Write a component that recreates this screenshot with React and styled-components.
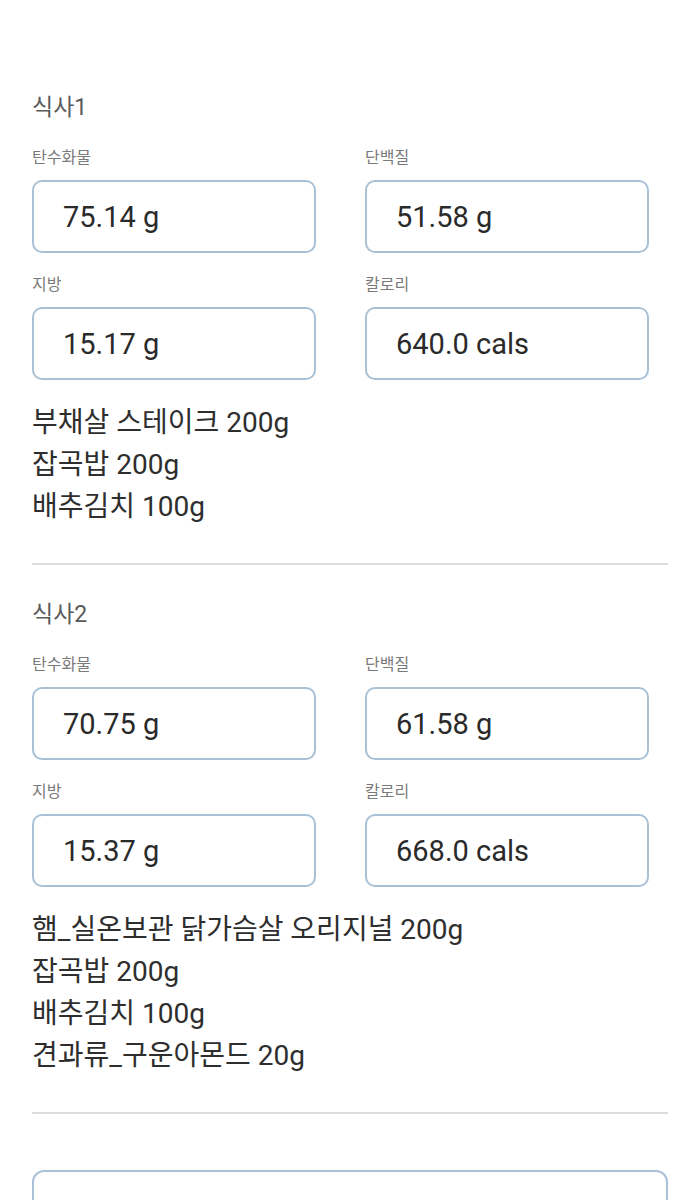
import React from 'react';
import styled, { createGlobalStyle } from 'styled-components';

const GlobalStyle = createGlobalStyle`
  html, body {
    margin: 0;
    padding: 0;
    background: #fff;
  }
  body {
    font-family: Roboto, "Noto Sans CJK KR", sans-serif;
  }
`;

const Page = styled.div`
  width: 700px;
  height: 1200px;
  overflow: hidden;
  box-sizing: border-box;
  padding: 94px 32px 0 32px;
  background: #fff;
`;

const Meal = styled.section`
  display: flex;
  flex-direction: column;
`;

const MealTitle = styled.h2`
  margin: 0;
  font-size: 23px;
  line-height: 28px;
  font-weight: 400;
  color: #5a5a5a;
`;

const NutrientGrid = styled.div`
  display: grid;
  grid-template-columns: 284px 284px;
  column-gap: 49px;
  row-gap: 22px;
  margin-top: 26px;
`;

const Field = styled.div`
  display: flex;
  flex-direction: column;
  gap: 12px;
`;

const FieldLabel = styled.label`
  font-size: 16px;
  line-height: 20px;
  color: #7a7a7a;
`;

const ValueBox = styled.div`
  box-sizing: border-box;
  height: 73px;
  border: 2px solid #a9c1d6;
  border-radius: 10px;
  display: flex;
  align-items: center;
  padding-left: 29px;
  font-size: 29px;
  color: #2a2a2a;
`;

const FoodList = styled.ul`
  list-style: none;
  margin: 22px 0 0 0;
  padding: 0;
`;

const FoodItem = styled.li`
  font-size: 28px;
  line-height: 42px;
  color: #2e2e2e;
`;

const Divider = styled.hr`
  border: none;
  height: 2px;
  background: #dcdcdc;
  margin: 35px 0 36px 0;
  width: 636px;
`;

const NoteBox = styled.div`
  box-sizing: border-box;
  width: 636px;
  height: 80px;
  margin-top: 20px;
  border: 2px solid #a9c1d6;
  border-radius: 12px;
`;

const meals = [
  {
    title: '식사1',
    carbs: '75.14 g',
    protein: '51.58 g',
    fat: '15.17 g',
    cals: '640.0 cals',
    foods: ['부채살 스테이크 200g', '잡곡밥 200g', '배추김치 100g'],
  },
  {
    title: '식사2',
    carbs: '70.75 g',
    protein: '61.58 g',
    fat: '15.37 g',
    cals: '668.0 cals',
    foods: ['햄_실온보관 닭가슴살 오리지널 200g', '잡곡밥 200g', '배추김치 100g', '견과류_구운아몬드 20g'],
  },
];

const MealCard = ({ meal }) => (
  <Meal>
    <MealTitle>{meal.title}</MealTitle>
    <NutrientGrid>
      <Field>
        <FieldLabel>탄수화물</FieldLabel>
        <ValueBox>{meal.carbs}</ValueBox>
      </Field>
      <Field>
        <FieldLabel>단백질</FieldLabel>
        <ValueBox>{meal.protein}</ValueBox>
      </Field>
      <Field>
        <FieldLabel>지방</FieldLabel>
        <ValueBox>{meal.fat}</ValueBox>
      </Field>
      <Field>
        <FieldLabel>칼로리</FieldLabel>
        <ValueBox>{meal.cals}</ValueBox>
      </Field>
    </NutrientGrid>
    <FoodList>
      {meal.foods.map((f) => (
        <FoodItem key={f}>{f}</FoodItem>
      ))}
    </FoodList>
    <Divider />
  </Meal>
);

const App = () => (
  <>
    <GlobalStyle />
    <Page>
      {meals.map((m) => (
        <MealCard key={m.title} meal={m} />
      ))}
      <NoteBox />
    </Page>
  </>
);

export default App;
